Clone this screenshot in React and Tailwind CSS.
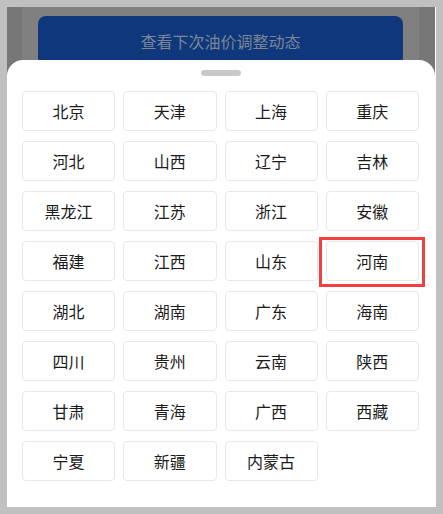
import React from 'react';

const provinces = [
  '北京', '天津', '上海', '重庆',
  '河北', '山西', '辽宁', '吉林',
  '黑龙江', '江苏', '浙江', '安徽',
  '福建', '江西', '山东', '河南',
  '湖北', '湖南', '广东', '海南',
  '四川', '贵州', '云南', '陕西',
  '甘肃', '青海', '广西', '西藏',
  '宁夏', '新疆', '内蒙古',
];

const font = { fontFamily: '"Noto Sans CJK SC", "Noto Sans", sans-serif' };

export default function App() {
  return (
    <div className="w-[443px] h-[514px] bg-[#c0c0c0] pt-[7px] pl-[7px] pr-[7px] pb-[7px]" style={font}>
      <div className="relative h-[500px] w-[429px] flex border-r border-white bg-[#808080] overflow-hidden">
        {/* page behind the mask */}
        <div className="w-[15px] h-full bg-[#777777]" />
        <div className="flex-1 px-4 pt-[9px]">
          <div className="h-[50px] rounded-lg bg-[#0f387c] flex items-center justify-center text-[16px] text-[#7b8596]">
            查看下次油价调整动态
          </div>
        </div>
        <div className="w-[16px] h-full bg-[#777777]" />

        {/* bottom sheet */}
        <div className="absolute left-0 right-0 bottom-0 top-[53px] bg-white rounded-t-[16px]">
          <div className="flex justify-center pt-[10px]">
            <div className="w-[40px] h-[6px] rounded-full bg-[#c8c8ca]" />
          </div>
          <div className="relative grid grid-cols-4 gap-x-2 gap-y-[10px] pl-[15px] pr-[16px] mt-[15px]">
            {provinces.map((p) => (
              <div
                key={p}
                className="h-[40px] rounded-[4px] border border-[#e8e8e8] flex items-center justify-center text-[16px] text-[#1c1c1c]"
              >
                {p}
              </div>
            ))}
            {/* highlight around 河南 */}
            <div className="absolute left-[312px] top-[146px] w-[106px] h-[50px] border-[3px] border-[#f23f3f] pointer-events-none" />
          </div>
        </div>
      </div>
    </div>
  );
}
